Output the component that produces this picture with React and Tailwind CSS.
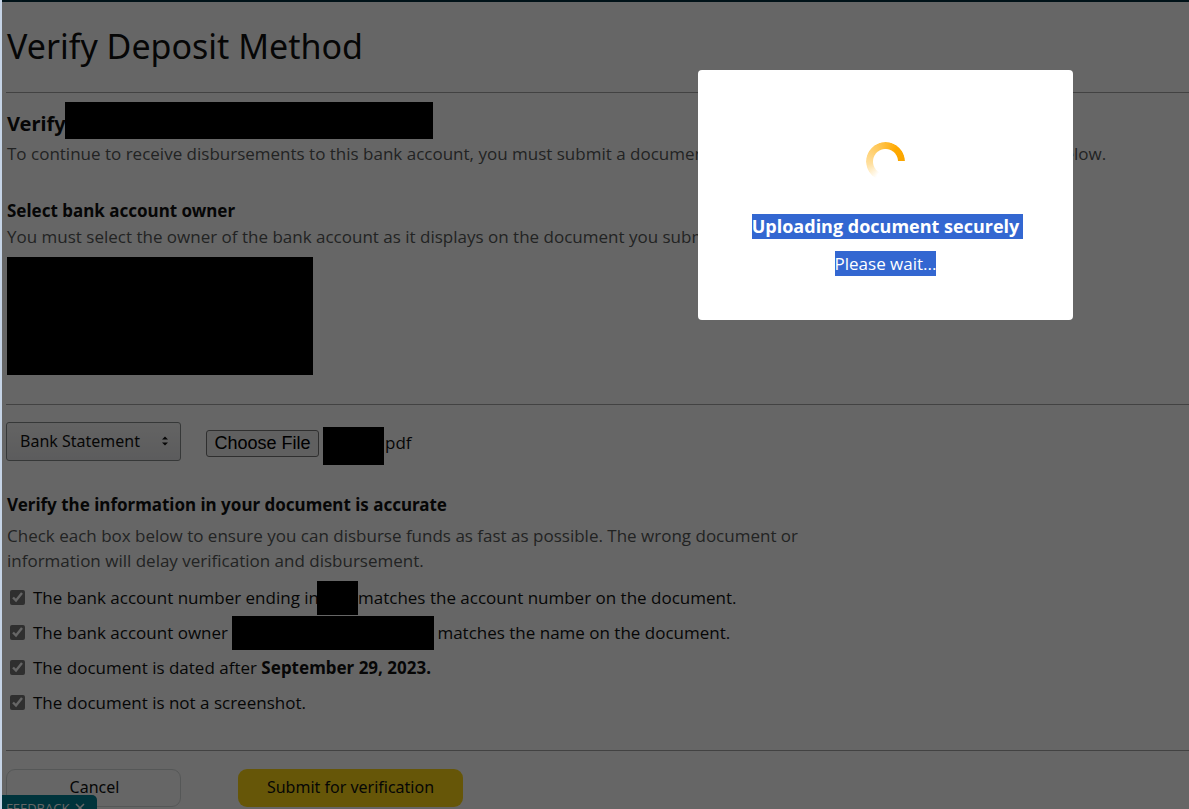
// src/App.jsx
import React, { useRef } from "react";

const Redacted = ({ className }) => (
  <span className={`shrink-0 bg-black ${className}`} aria-hidden="true" />
);

const Divider = ({ className }) => (
  <hr className={`border-t border-[#a6a6a6] ${className}`} />
);

const CheckRow = ({ id, children }) => (
  <div className="flex h-[35px] items-center gap-2 pl-[3px]">
    <input
      id={id}
      type="checkbox"
      defaultChecked
      className="h-[15px] w-[15px] shrink-0 accent-[#767676]"
    />
    <label htmlFor={id} className="flex items-center whitespace-pre">
      {children}
    </label>
  </div>
);

const Spinner = () => (
  <div
    role="status"
    aria-label="Loading"
    className="h-[39px] w-[39px] rounded-full bg-[conic-gradient(from_90deg,transparent_0deg,transparent_120deg,#ffe0a0_170deg,#ffc95c_240deg,#ffa900_310deg,#f9a500_360deg)] [mask-image:radial-gradient(circle,transparent_12px,black_13px)]"
  />
);

const UploadDialog = () => (
  <div
    role="dialog"
    aria-labelledby="upload-title"
    className="absolute top-[70px] right-[116px] flex h-[250px] w-[375px] flex-col items-center rounded bg-white pt-[72px] text-white"
  >
    <Spinner />
    <h2
      id="upload-title"
      className="mt-[33px] ml-1 bg-[#3367d1] pr-1 font-['Open_Sans',sans-serif] text-[18px] leading-[25px] font-bold whitespace-nowrap"
    >
      Uploading document securely
    </h2>
    <p className="mt-3 bg-[#3367d1] text-[17px] leading-[25px]">
      Please wait...
    </p>
  </div>
);

const DocumentPicker = () => {
  const fileRef = useRef(null);

  return (
    <div className="mt-[17px] flex h-[43px] items-start">
      <div className="relative">
        <select
          aria-label="Document type"
          className="h-[39px] w-[175px] appearance-none rounded-[3px] border border-[#888c8c] bg-linear-to-b from-[#f8f8f8] to-[#e6e6e8] pl-[13px] font-['Noto_Sans',sans-serif] text-[16px] text-[#111]"
        >
          <option>Bank Statement</option>
        </select>
        <svg
          viewBox="0 0 6 10"
          className="pointer-events-none absolute top-[14px] right-[13px] h-[10px] w-[6px]"
          fill="#111"
        >
          <path d="M0 3.5 3 .5 6 3.5ZM0 6.5 3 9.5 6 6.5Z" />
        </svg>
      </div>
      <button
        type="button"
        onClick={() => fileRef.current.click()}
        className="mt-2 ml-[25px] h-[27px] w-[113px] rounded-[3px] border border-[#767676] bg-[#efefef] pb-px font-['Liberation_Sans',sans-serif] text-[18px] leading-6 whitespace-nowrap text-black"
      >
        Choose File
      </button>
      <input
        ref={fileRef}
        type="file"
        aria-label="Document"
        className="hidden"
      />
      <Redacted className="mt-[5px] ml-1 h-[38px] w-[61px]" />
      <span className="mt-2 ml-px leading-[25px]">pdf</span>
    </div>
  );
};

export default function App() {
  return (
    <div className="relative h-screen overflow-hidden border-l-2 border-[#c6d4e6] bg-white font-['Open_Sans',sans-serif] text-[17px] leading-[25px] text-[#0f1111]">
      <div className="h-[2px] bg-[#002f3d]" />
      <main className="pl-1">
        <h1 className="pt-[20px] pl-px font-['Noto_Sans',sans-serif] text-[34px] leading-[48px]">
          Verify Deposit Method
        </h1>
        <Divider className="mt-[22px]" />

        <section className="pl-px">
          <h2 className="mt-[9px] flex h-[37px] items-center font-['Noto_Sans',sans-serif] text-[20px] font-bold">
            <span className="w-[58px] pt-[6px]">Verify</span>
            <Redacted className="h-[37px] w-[368px]" />
          </h2>
          <p className="mt-[2px] whitespace-nowrap text-[#565959]">
            To continue to receive disbursements to this bank account, you must
            submit a document that confirms the requirements presented below.
          </p>
          <h3 className="mt-8 font-['Noto_Sans',sans-serif] font-bold">
            Select bank account owner
          </h3>
          <p className="mt-px whitespace-nowrap text-[#565959]">
            You must select the owner of the bank account as it displays on the
            document you submit.
          </p>
          <Redacted className="mt-[8px] block h-[118px] w-[306px]" />
        </section>

        <Divider className="mt-[29px]" />
        <DocumentPicker />

        <section className="pl-px">
          <h3 className="mt-[27px] font-['Noto_Sans',sans-serif] font-bold">
            Verify the information in your document is accurate
          </h3>
          <p className="mt-[6px] max-w-[810px] text-[#565959]">
            Check each box below to ensure you can disburse funds as fast as
            possible. The wrong document or
            <br />
            information will delay verification and disbursement.
          </p>
          <div className="mt-[7px]">
            <CheckRow id="number">
              The bank account number ending in
              <Redacted className="-ml-[2px] h-[34px] w-[41px]" />
              matches the account number on the document.
            </CheckRow>
            <CheckRow id="owner">
              {"The bank account owner "}
              <Redacted className="mr-[3px] h-[34px] w-[202px]" />
              matches the name on the document.
            </CheckRow>
            <CheckRow id="dated">
              {"The document is dated after "}
              <strong className="font-['Noto_Sans',sans-serif]">
                September 29, 2023.
              </strong>
            </CheckRow>
            <CheckRow id="original">The document is not a screenshot.</CheckRow>
          </div>
        </section>

        <Divider className="mt-[30px]" />
        <div className="mt-[18px] flex gap-[57px] font-['Noto_Sans',sans-serif] text-[16px]">
          <button
            type="button"
            className="h-[38px] w-[175px] rounded-[9px] border border-[#d5d9d9] bg-white pb-[2px] pl-[2px]"
          >
            Cancel
          </button>
          <button
            type="submit"
            className="h-[38px] w-[225px] rounded-[9px] bg-[#ffd814] pb-[2px]"
          >
            Submit for verification
          </button>
        </div>
      </main>

      <button
        type="button"
        className="absolute top-[795px] left-0 flex h-[26px] w-[95px] items-center gap-[6px] rounded-tr-[5px] bg-[#008296] pl-1 text-[13px] leading-[26px] text-white"
      >
        FEEDBACK
        <svg viewBox="0 0 10 10" className="h-[10px] w-[10px]" stroke="#fff" strokeWidth="1.5">
          <path d="M1 1 9 9M9 1 1 9" />
        </svg>
      </button>

      <div className="absolute inset-0 bg-black/60" />
      <UploadDialog />
    </div>
  );
}
